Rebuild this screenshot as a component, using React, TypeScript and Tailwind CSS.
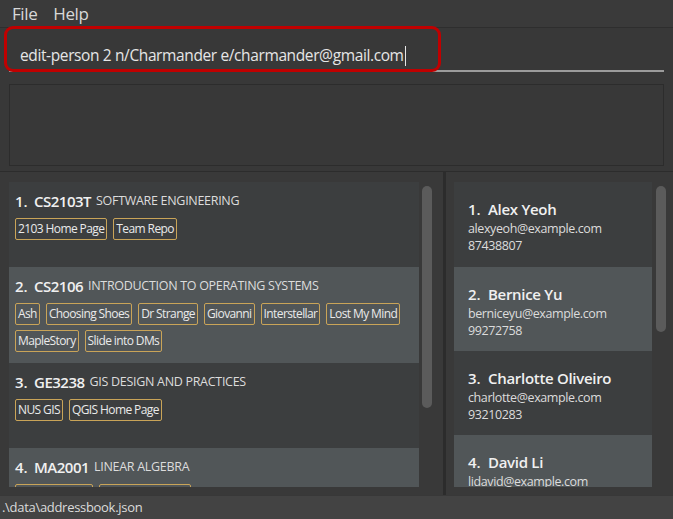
import React from 'react'

const MODULES = [
  {
    code: 'CS2103T',
    name: 'SOFTWARE ENGINEERING',
    tags: ['2103 Home Page', 'Team Repo'],
    height: 'h-[85px]',
  },
  {
    code: 'CS2106',
    name: 'INTRODUCTION TO OPERATING SYSTEMS',
    tags: ['Ash', 'Choosing Shoes', 'Dr Strange', 'Giovanni', 'Interstellar', 'Lost My Mind', 'MapleStory', 'Slide into DMs'],
    height: 'h-[96px]',
  },
  {
    code: 'GE3238',
    name: 'GIS DESIGN AND PRACTICES',
    tags: ['NUS GIS', 'QGIS Home Page'],
    height: 'h-[85px]',
  },
  {
    code: 'MA2001',
    name: 'LINEAR ALGEBRA',
    tags: ['Linear Algebra', 'Matrix Calculator'],
    height: 'h-[85px]',
  },
]

const PERSONS = [
  { name: 'Alex Yeoh', email: 'alexyeoh@example.com', phone: '87438807' },
  { name: 'Bernice Yu', email: 'berniceyu@example.com', phone: '99272758' },
  { name: 'Charlotte Oliveiro', email: 'charlotte@example.com', phone: '93210283' },
  { name: 'David Li', email: 'lidavid@example.com', phone: '91031282' },
]

function Scrollbar({ className }: { className: string }) {
  return <div className={`absolute w-[10px] rounded-full bg-[#5b5b5b] ${className}`} />
}

export default function App() {
  return (
    <div
      className="flex h-[519px] w-[673px] flex-col overflow-hidden bg-[#383838] text-[#dcdcdc]"
      style={{ fontFamily: '"Open Sans", "Noto Sans", sans-serif' }}
    >
      {/* menu bar */}
      <div className="flex h-[28px] shrink-0 items-center gap-[16px] border-b border-[#2e2e2e] bg-[#3a3a3a] pl-[12px] text-[17px] tracking-[-0.4px] text-[#d8d8d8]">
        <span>File</span>
        <span>Help</span>
      </div>

      {/* command box */}
      <div className="relative h-[48px] shrink-0 px-[9px]">
        <div className="flex h-[44px] items-center border-b-2 border-[#9b9b9b] pl-[11px] pt-[13px] text-[15.5px] tracking-[-0.38px] text-[#e6e6e6]">
          <span>edit-person 2 n/Charmander e/charmander@gmail.com</span>
          <span className="ml-[1px] h-[20px] w-px bg-[#e6e6e6]" />
        </div>
        <div className="absolute left-[4px] top-[-2px] h-[46px] w-[437px] rounded-[9px] border-[3px] border-[#c00000]" />
      </div>

      {/* result display */}
      <div className="shrink-0 px-[9px] pt-[8px]">
        <div className="h-[82px] border border-[#2c2c2c] bg-[#383838]" />
      </div>
      <div className="mt-[5px] h-px shrink-0 bg-[#2c2c2c]" />

      {/* lists */}
      <div className="flex min-h-0 flex-1">
        <div className="relative flex w-[443px] flex-col bg-[#393939] pb-[8px] pl-[9px] pt-[10px]">
          <div className="flex min-h-0 w-[410px] flex-1 flex-col overflow-hidden">
            {MODULES.map((m, i) => (
              <div
                key={m.code}
                className={`${m.height} shrink-0 px-[6px] pt-[9px] ${i % 2 === 0 ? 'bg-[#3c3e3f]' : 'bg-[#515658]'}`}
              >
                <div className="flex h-[20px] items-center whitespace-nowrap">
                  <span className="w-[19px] text-[15px] font-semibold text-[#f0f0f0]">{i + 1}.</span>
                  <span className="text-[15px] font-semibold tracking-[-0.5px] text-[#f0f0f0]">{m.code}</span>
                  <span className="ml-[5px] text-[12.5px] tracking-[-0.3px] text-[#dcdcdc]">{m.name}</span>
                </div>
                <div className="mt-[7px] flex flex-wrap gap-x-[6px] gap-y-[5px]">
                  {m.tags.map((t) => (
                    <span
                      key={t}
                      className="flex h-[22px] items-center rounded-[2px] border-[1.5px] border-[#c9a458] px-[2px] text-[12px] tracking-[-0.6px] text-[#eaeaea]"
                    >
                      {t}
                    </span>
                  ))}
                </div>
              </div>
            ))}
          </div>
          <Scrollbar className="left-[422px] top-[14px] h-[222px]" />
        </div>

        <div className="w-[3px] shrink-0 bg-[#2c2c2c]" />

        <div className="relative flex flex-1 flex-col bg-[#393939] pb-[8px] pl-[8px] pt-[10px]">
          <div className="flex min-h-0 w-[198px] flex-1 flex-col overflow-hidden">
            {PERSONS.map((p, i) => (
              <div
                key={p.name}
                className={`h-[84px] shrink-0 px-[14px] pt-[17px] first:h-[85px] ${i % 2 === 0 ? 'bg-[#3c3e3f]' : 'bg-[#515658]'}`}
              >
                <div className="flex h-[20px] items-center text-[15px] font-semibold text-[#f0f0f0]">
                  <span className="w-[20px]">{i + 1}.</span>
                  <span className="tracking-[-0.3px]">{p.name}</span>
                </div>
                <div className="mt-[1px] text-[12.5px] leading-[17px] tracking-[-0.4px] text-[#dcdcdc]">{p.email}</div>
                <div className="text-[12.5px] leading-[17px] tracking-[-0.4px] text-[#dcdcdc]">{p.phone}</div>
              </div>
            ))}
          </div>
          <Scrollbar className="left-[210px] top-[14px] h-[146px]" />
        </div>
      </div>

      {/* status bar */}
      <div className="mt-[1px] flex h-[23px] shrink-0 items-center bg-[#434343] pl-[2px] text-[13px] tracking-[-0.3px] text-[#dcdcdc]">
        .\data\addressbook.json
      </div>
    </div>
  )
}
